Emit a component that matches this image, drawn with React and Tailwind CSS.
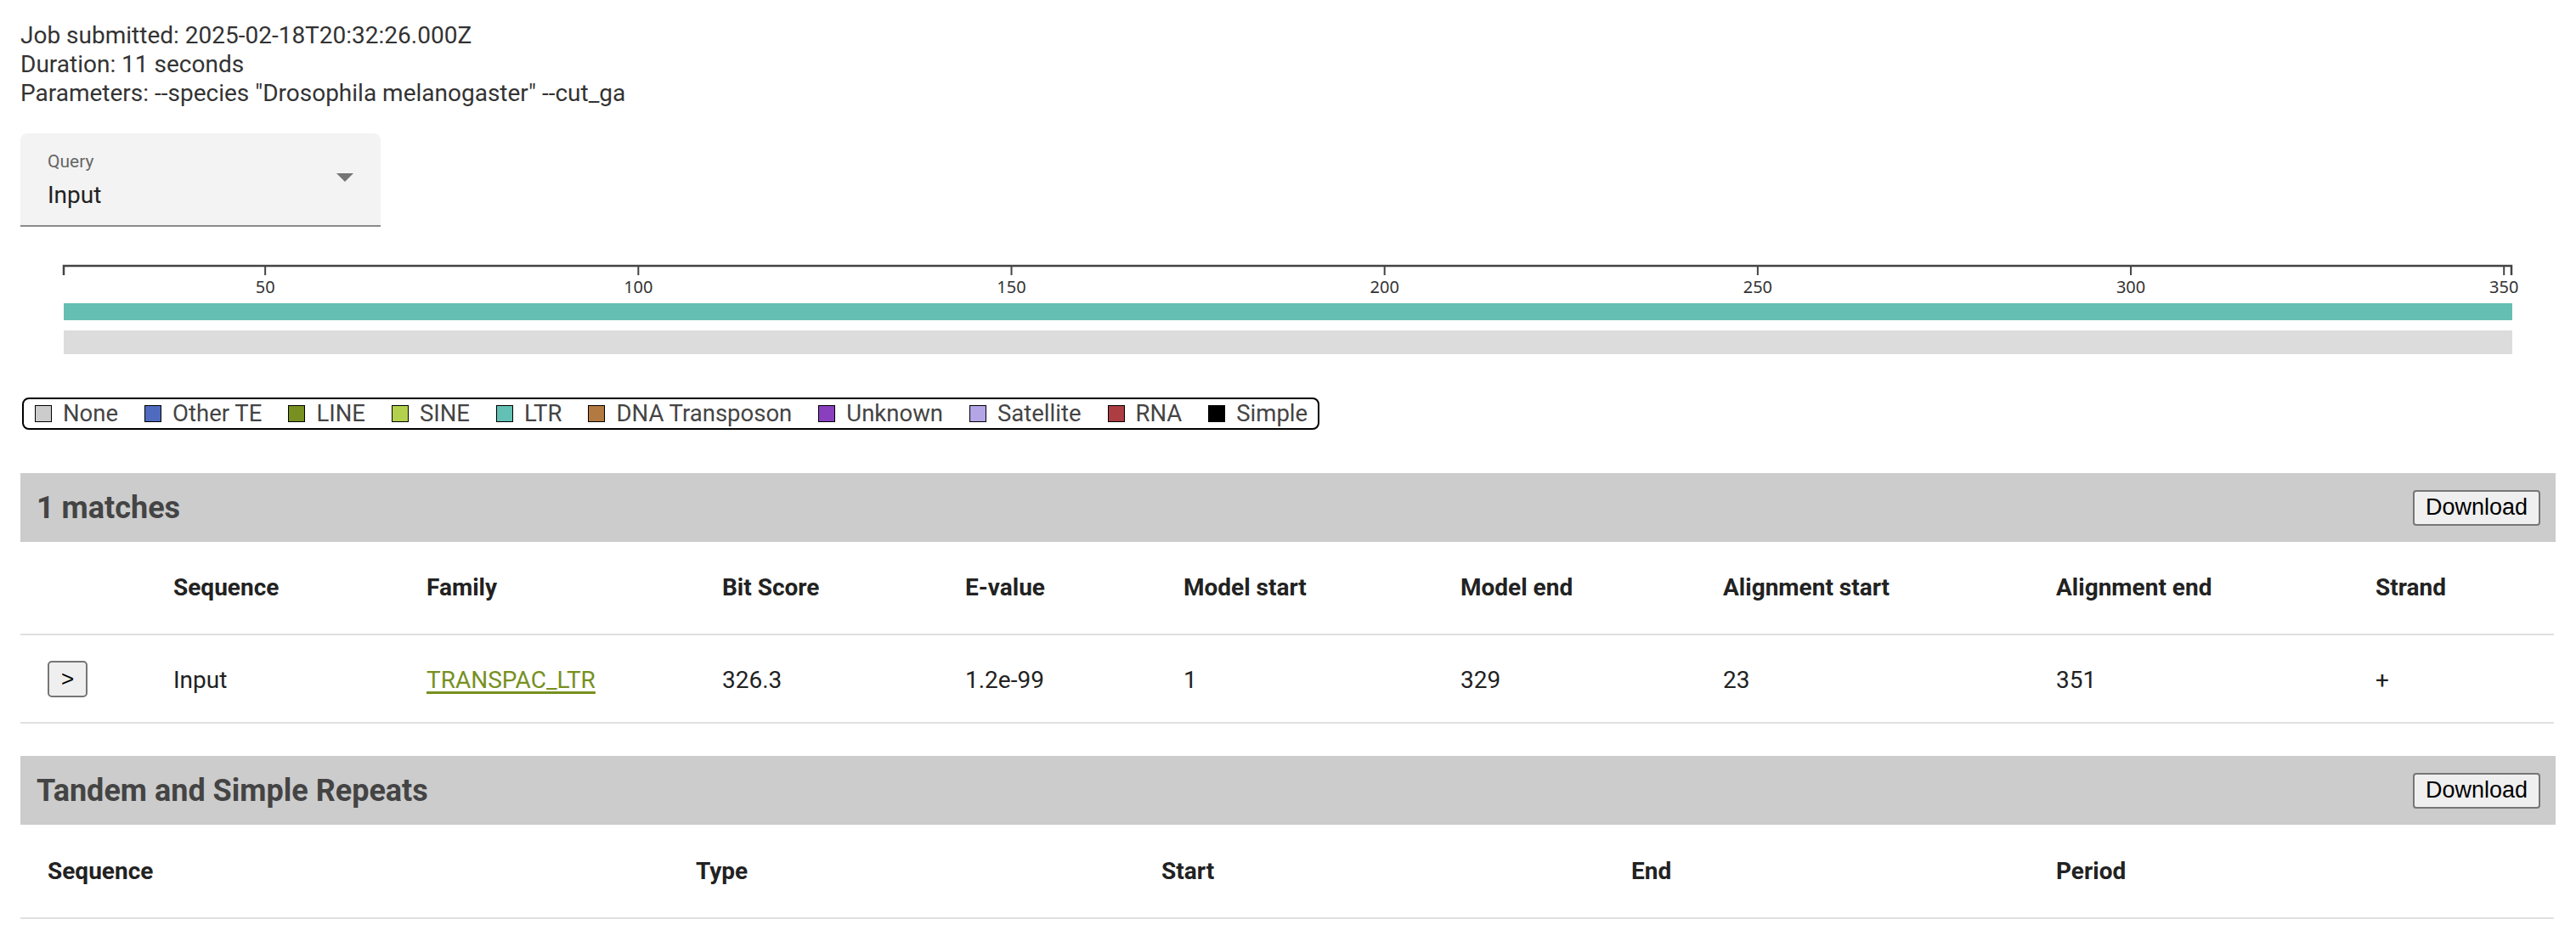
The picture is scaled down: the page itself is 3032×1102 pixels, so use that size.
import React from 'react';

const legend = [
  { name: 'None', color: '#cccccc' },
  { name: 'Other TE', color: '#4f6bbf' },
  { name: 'LINE', color: '#77901f' },
  { name: 'SINE', color: '#b3d14c' },
  { name: 'LTR', color: '#63c0b4' },
  { name: 'DNA Transposon', color: '#b27a40' },
  { name: 'Unknown', color: '#8a3fbf' },
  { name: 'Satellite', color: '#b4a5e6' },
  { name: 'RNA', color: '#ab3d43' },
  { name: 'Simple', color: '#000000' },
];

// axis domain is the alignment range
const X0 = 51;
const X1 = 2932;
const D0 = 23;
const D1 = 351;
const sx = v => X0 + ((v - D0) * (X1 - X0)) / (D1 - D0);
const ticks = [50, 100, 150, 200, 250, 300, 350];

const matchCols = [
  'Sequence',
  'Family',
  'Bit Score',
  'E-value',
  'Model start',
  'Model end',
  'Alignment start',
  'Alignment end',
  'Strand',
];

const repeatCols = ['Sequence', 'Type', 'Start', 'End', 'Period'];

const SectionHeader = ({ title }) => (
  <div className="flex items-center justify-between h-[81px] bg-[#cccccc] pl-[19px] pr-[18px]">
    <h2 className="text-[36px] font-bold text-[#444444]">{title}</h2>
    <button className="h-[42px] w-[150px] bg-[#efefef] border-2 border-[#767676] rounded-[4px] text-[27px] text-black font-['Liberation_Sans',Arial,sans-serif] leading-none">
      Download
    </button>
  </div>
);

const Axis = () => (
  <svg width="2982" height="150" className="block mt-[13px]">
    <path
      d={`M${X0},44V33H${X1}V44`}
      fill="none"
      stroke="#444"
      strokeWidth="2.5"
    />
    {ticks.map(t => (
      <g key={t}>
        <line x1={sx(t)} x2={sx(t)} y1="33" y2="44" stroke="#444" strokeWidth="2" />
        <text
          x={sx(t)}
          y="65"
          textAnchor="middle"
          fontSize="20"
          fill="#333"
          fontFamily="'Noto Sans', 'Open Sans', sans-serif"
        >
          {t}
        </text>
      </g>
    ))}
    <rect x={X0} y="77" width={X1 - X0 + 1} height="20" fill="#66bfb3" />
    <rect x={X0} y="109" width={X1 - X0 + 1} height="28" fill="#dcdcdc" />
  </svg>
);

const App = () => {
  return (
    <div className="min-h-screen bg-white px-[24px] pt-[25px] font-['Roboto','Noto_Sans',sans-serif]">
      <div className="text-[28px] leading-[34px] text-[#333333]">
        <p>Job submitted: 2025-02-18T20:32:26.000Z</p>
        <p>Duration: 11 seconds</p>
        <p>Parameters: --species "Drosophila melanogaster" --cut_ga</p>
      </div>

      <div className="mt-[30px] flex items-center justify-between w-[424px] h-[110px] bg-[#f3f3f3] rounded-t-[8px] border-b-2 border-[#8a8a8a] pl-[32px] pr-[32px]">
        <div className="flex flex-col pt-[2px]">
          <span className="text-[21px] leading-[24px] text-[#666666]">Query</span>
          <span className="mt-[12px] text-[28px] leading-[32px] text-[#222222]">Input</span>
        </div>
        <svg width="20" height="10" viewBox="0 0 20 10" className="mb-[4px]">
          <path d="M0 0h20L10 10z" fill="#757575" />
        </svg>
      </div>

      <Axis />

      <div className="mt-[38px] ml-[2px] inline-flex items-center gap-[31px] h-[38px] border-[2.5px] border-black rounded-[8px] pl-[13px] pr-[12px]">
        {legend.map(l => (
          <div key={l.name} className="flex items-center gap-[13px]">
            <span
              className="w-[20px] h-[20px] border-[1.5px] border-black"
              style={{ backgroundColor: l.color }}
            />
            <span className="text-[27.5px] leading-none text-[#444444]">{l.name}</span>
          </div>
        ))}
      </div>

      <div className="mt-[51px]">
        <SectionHeader title="1 matches" />
        <div className="grid grid-cols-[148px_298px_348px_286px_257px_326px_309px_392px_376px_242px] text-[28px] text-[#222222]">
          <div className="h-[110px] border-b-2 border-[#e0e0e0]" />
          {matchCols.map(c => (
            <div
              key={c}
              className="h-[110px] flex items-center px-[32px] font-bold border-b-2 border-[#e0e0e0]"
            >
              {c}
            </div>
          ))}
          <div className="h-[104px] flex items-center pl-[32px] border-b-2 border-[#e0e0e0]">
            <button className="w-[47px] h-[43px] bg-[#efefef] border-2 border-[#767676] rounded-[5px] text-[26px] text-black font-['Liberation_Sans',Arial,sans-serif] leading-none">
              &gt;
            </button>
          </div>
          {[
            'Input',
            'TRANSPAC_LTR',
            '326.3',
            '1.2e-99',
            '1',
            '329',
            '23',
            '351',
            '+',
          ].map((v, i) => (
            <div
              key={i}
              className="h-[104px] flex items-center px-[32px] pt-[4px] border-b-2 border-[#e0e0e0]"
            >
              {i === 1 ? (
                <a href="#" className="text-[#77901f] underline underline-offset-[4px] decoration-[3px]">
                  {v}
                </a>
              ) : (
                v
              )}
            </div>
          ))}
        </div>
      </div>

      <div className="mt-[38px]">
        <SectionHeader title="Tandem and Simple Repeats" />
        <div className="grid grid-cols-[763px_548px_553px_500px_618px] text-[28px] text-[#222222]">
          {repeatCols.map(c => (
            <div
              key={c}
              className="h-[111px] flex items-center px-[32px] font-bold border-b-2 border-[#e0e0e0]"
            >
              {c}
            </div>
          ))}
        </div>
      </div>
    </div>
  );
};

export default App;
